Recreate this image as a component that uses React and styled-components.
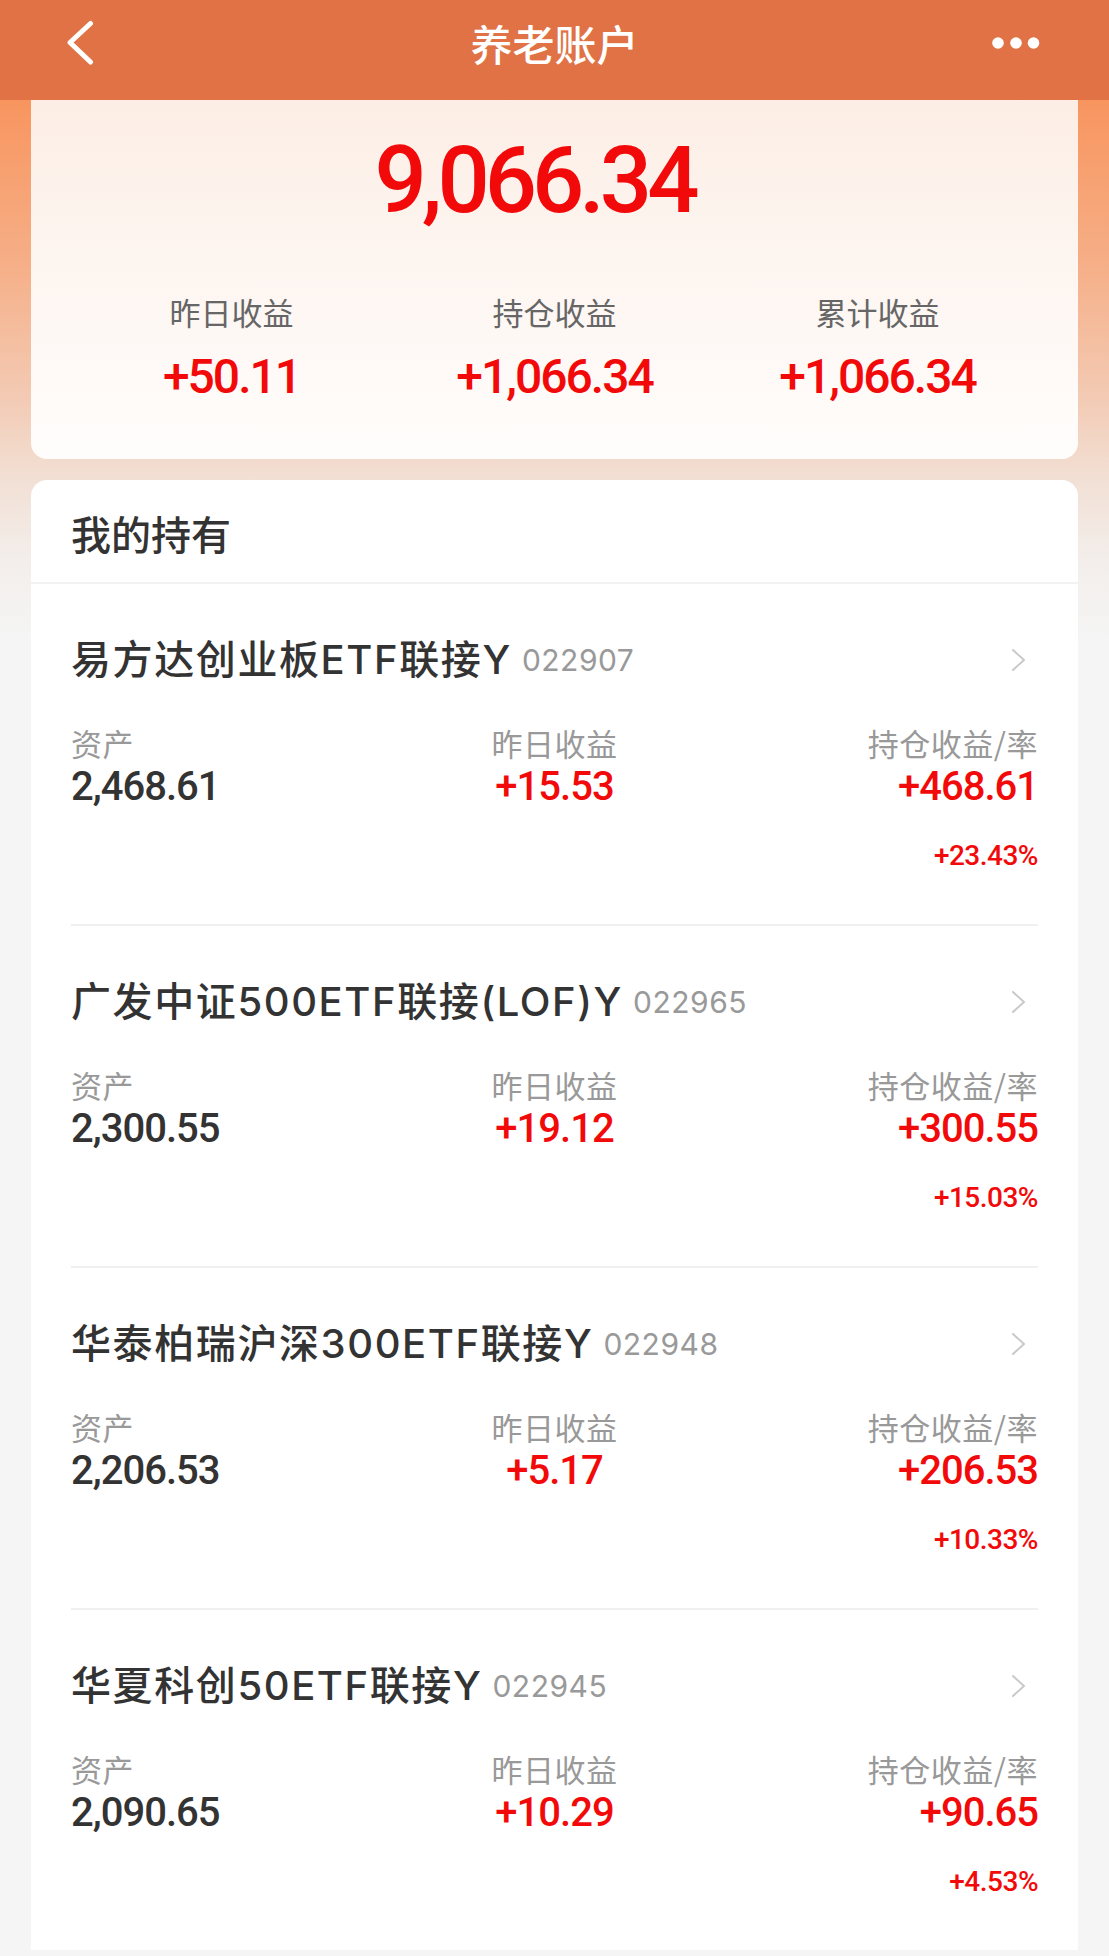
import React from 'react';
import styled, { createGlobalStyle } from 'styled-components';

const GlobalStyle = createGlobalStyle`
  * { box-sizing: border-box; }
  html, body { margin: 0; padding: 0; background: #f5f5f5; }
  body {
    font-family: "Noto Sans CJK SC", sans-serif;
    -webkit-font-smoothing: antialiased;
  }
`;

const RED = '#f20a0a';

const Page = styled.div`
  min-height: 100vh;
  background-color: #f5f5f5;
  background-image: linear-gradient(
    180deg,
    #f98a52 0px,
    #f8955f 100px,
    #f6ae86 260px,
    #f3cbb5 400px,
    #f2e0d5 480px,
    #f3eeeb 560px,
    #f5f5f5 640px
  );
  background-repeat: no-repeat;
  background-size: 100% 660px;
  padding: 40px 31px 0;
`;

const NavBar = styled.header`
  position: fixed;
  top: 0;
  left: 0;
  right: 0;
  z-index: 10;
  height: 100px;
  background: #e07245;
  display: grid;
  grid-template-columns: 1fr auto 1fr;
  align-items: center;
  padding-bottom: 14px;
`;

const BackButton = styled.button`
  justify-self: start;
  border: 0;
  background: none;
  padding: 0 0 0 66px;
  display: flex;
  align-items: center;
  cursor: pointer;
`;

const NavTitle = styled.h1`
  margin: 0;
  font-family: "Noto Sans CJK SC", sans-serif;
  font-size: 42px;
  font-weight: 500;
  line-height: 86px;
  color: #ffffff;
`;

const MoreButton = styled.button`
  justify-self: end;
  border: 0;
  background: none;
  padding: 0 69px 0 0;
  display: flex;
  align-items: center;
  cursor: pointer;
`;

const SummaryCard = styled.section`
  background: linear-gradient(180deg, #fcebe0 0%, #fdf3ed 40%, #fffdfc 100%);
  border-radius: 16px;
  padding: 86px 39px 54px;
  text-align: center;
`;

const BigNumber = styled.div`
  padding-right: 40px;
  font-family: "Roboto", sans-serif;
  font-weight: 500;
  font-size: 92px;
  line-height: 110px;
  letter-spacing: -5px;
  color: ${RED};
`;

const SummaryStats = styled.div`
  margin-top: 54px;
  display: grid;
  grid-template-columns: repeat(3, 1fr);
`;

const SummaryStat = styled.div`
  display: flex;
  flex-direction: column;
  align-items: center;
`;

const SummaryLabel = styled.div`
  font-size: 31px;
  line-height: 44px;
  color: #666666;
`;

const SummaryValue = styled.div`
  margin-top: 15px;
  font-family: "Roboto", sans-serif;
  font-weight: 500;
  font-size: 48px;
  line-height: 56px;
  letter-spacing: -2px;
  color: ${RED};
`;

const HoldingsCard = styled.section`
  margin-top: 21px;
  background: #ffffff;
  border-radius: 16px 16px 0 0;
`;

const HoldingsHeader = styled.h2`
  margin: 0;
  padding: 25px 40px 21px;
  font-size: 40px;
  font-weight: 500;
  line-height: 56px;
  color: #333333;
  border-bottom: 2px solid #f2f2f2;
`;

const Item = styled.div`
  margin: 0 40px;
  padding: 48px 0 50px;
  border-bottom: ${(p) => (p.$last ? '0' : '2px solid #f0f0f0')};
`;

const NameRow = styled.div`
  display: flex;
  align-items: center;
  height: 56px;
`;

const FundName = styled.span`
  font-family: "Inter", "Noto Sans CJK SC", sans-serif;
  font-size: 40px;
  font-weight: 500;
  line-height: 56px;
  letter-spacing: 1.6px;
  color: #333333;
  white-space: nowrap;
`;

const FundCode = styled.span`
  margin-left: 10px;
  font-family: "Inter", sans-serif;
  font-size: 30px;
  line-height: 56px;
  letter-spacing: 0.5px;
  color: #999999;
`;

const Chevron = styled.svg`
  margin-left: auto;
  margin-right: 12px;
  flex: none;
`;

const StatsGrid = styled.div`
  margin-top: 35px;
  display: grid;
  grid-template-columns: repeat(3, 1fr);
`;

const StatCol = styled.div`
  display: flex;
  flex-direction: column;
  align-items: ${(p) => p.$align};
`;

const StatLabel = styled.div`
  font-family: "Noto Sans CJK SC", sans-serif;
  font-size: 31px;
  line-height: 40px;
  letter-spacing: 0.5px;
  color: #999999;
`;

const StatValue = styled.div`
  font-family: "Roboto", sans-serif;
  font-weight: 500;
  font-size: 40px;
  line-height: 48px;
  letter-spacing: -1px;
  color: ${(p) => (p.$red ? RED : '#333333')};
`;

const Percent = styled.div`
  margin-top: 27px;
  font-family: "Roboto", sans-serif;
  font-weight: 500;
  font-size: 28px;
  line-height: 36px;
  letter-spacing: -0.5px;
  color: ${RED};
`;

const funds = [
  { name: '易方达创业板ETF联接Y', code: '022907', asset: '2,468.61', day: '+15.53', hold: '+468.61', rate: '+23.43%' },
  { name: '广发中证500ETF联接(LOF)Y', code: '022965', asset: '2,300.55', day: '+19.12', hold: '+300.55', rate: '+15.03%' },
  { name: '华泰柏瑞沪深300ETF联接Y', code: '022948', asset: '2,206.53', day: '+5.17', hold: '+206.53', rate: '+10.33%' },
  { name: '华夏科创50ETF联接Y', code: '022945', asset: '2,090.65', day: '+10.29', hold: '+90.65', rate: '+4.53%' },
];

const summary = [
  { label: '昨日收益', value: '+50.11' },
  { label: '持仓收益', value: '+1,066.34' },
  { label: '累计收益', value: '+1,066.34' },
];

export default function App() {
  return (
    <>
      <GlobalStyle />
      <Page>
        <NavBar>
          <BackButton aria-label="返回">
            <svg width="28" height="46" viewBox="0 0 28 46">
              <polyline
                points="24.5,3.5 4,22.5 24.5,42"
                fill="none"
                stroke="#ffffff"
                strokeWidth="5"
                strokeLinecap="round"
                strokeLinejoin="round"
              />
            </svg>
          </BackButton>
          <NavTitle>养老账户</NavTitle>
          <MoreButton aria-label="更多">
            <svg width="48" height="14" viewBox="0 0 48 14">
              <circle cx="6" cy="7" r="5.8" fill="#ffffff" />
              <circle cx="24" cy="7" r="5.8" fill="#ffffff" />
              <circle cx="41.5" cy="7" r="5.8" fill="#ffffff" />
            </svg>
          </MoreButton>
        </NavBar>

        <SummaryCard>
          <BigNumber>9,066.34</BigNumber>
          <SummaryStats>
            {summary.map((s) => (
              <SummaryStat key={s.label}>
                <SummaryLabel>{s.label}</SummaryLabel>
                <SummaryValue>{s.value}</SummaryValue>
              </SummaryStat>
            ))}
          </SummaryStats>
        </SummaryCard>

        <HoldingsCard>
          <HoldingsHeader>我的持有</HoldingsHeader>
          {funds.map((f, i) => (
            <Item key={f.code} $last={i === funds.length - 1}>
              <NameRow>
                <FundName>{f.name}</FundName>
                <FundCode>{f.code}</FundCode>
                <Chevron width="15" height="24" viewBox="0 0 15 24">
                  <polyline
                    points="2,2 13,12 2,22"
                    fill="none"
                    stroke="#c9c9c9"
                    strokeWidth="2"
                    strokeLinecap="round"
                    strokeLinejoin="round"
                  />
                </Chevron>
              </NameRow>
              <StatsGrid>
                <StatCol $align="flex-start">
                  <StatLabel>资产</StatLabel>
                  <StatValue>{f.asset}</StatValue>
                </StatCol>
                <StatCol $align="center">
                  <StatLabel>昨日收益</StatLabel>
                  <StatValue $red>{f.day}</StatValue>
                </StatCol>
                <StatCol $align="flex-end">
                  <StatLabel>持仓收益/率</StatLabel>
                  <StatValue $red>{f.hold}</StatValue>
                  <Percent>{f.rate}</Percent>
                </StatCol>
              </StatsGrid>
            </Item>
          ))}
        </HoldingsCard>
      </Page>
    </>
  );
}
